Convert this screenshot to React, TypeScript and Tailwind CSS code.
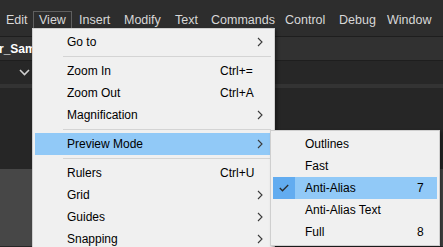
import React from "react";

const font = { fontFamily: '"Segoe UI", "Liberation Sans", Arial, sans-serif' };

const bar: [string, number, number][] = [
  ["Edit", 33, 5],
  ["View", 39, 5],
  ["Insert", 45, 6],
  ["Modify", 51, 6],
  ["Text", 36, 6],
  ["Commands", 74, 6],
  ["Control", 54, 6],
  ["Debug", 48, 6],
  ["Window", 60, 6],
];

function Chevron() {
  return (
    <svg width="6" height="10" viewBox="0 0 6 10" className="absolute right-[9px] top-[6px]">
      <polyline points="1,1 5,5 1,9" fill="none" stroke="#3a3a3a" strokeWidth="1.1" />
    </svg>
  );
}

function Row({ label, shortcut, sub, active }: { label: string; shortcut?: string; sub?: boolean; active?: boolean }) {
  return (
    <div className={`relative flex h-[22px] items-center pl-[32px] ${active ? "bg-[#91c9f7]" : ""}`}>
      <span>{label}</span>
      {shortcut && <span className="absolute left-[185px]">{shortcut}</span>}
      {sub && <Chevron />}
    </div>
  );
}

function Sep() {
  return (
    <div className="flex h-[7px] items-center pl-[28px] pr-[1px]">
      <div className="h-px w-full bg-[#d4d4d4]" />
    </div>
  );
}

export default function App() {
  return (
    <div className="relative h-[247px] w-[443px] overflow-hidden bg-[#262626] text-[12px]" style={font}>
      {/* menubar */}
      <div className="flex h-[37px] border-b border-[#1e1e1e] bg-[#2d2d2d] pt-[11px] text-[12.5px] text-[#d8d8d8]">
        {bar.map(([label, w, pl]) => (
          <div
            key={label}
            className={`h-[19px] shrink-0 leading-[16px] ${label === "View" ? "border border-[#5f5f5f]" : "border border-transparent"}`}
            style={{ width: w, paddingLeft: pl }}
          >
            {label}
          </div>
        ))}
      </div>

      {/* document tab row */}
      <div className="flex h-[24px] items-center border-b border-[#1e1e1e] bg-[#313131] text-[12px] font-bold text-white">
        <span className="-ml-[1px]">r_Sample.fla</span>
      </div>

      {/* toolbar row */}
      <div className="flex h-[23px] items-center bg-[#272727] pl-[19px]">
        <svg width="11" height="7" viewBox="0 0 11 7">
          <polyline points="1,1 5.5,5.5 10,1" fill="none" stroke="#cfcfcf" strokeWidth="1.6" />
        </svg>
      </div>
      <div className="h-[4px] bg-[#333333]" />
      <div className="h-[81px] bg-[#262626]" />
      <div className="h-[77px] bg-[#474747]" />

      {/* View menu */}
      <div className="absolute left-[32px] top-[28px] w-[243px] border border-[#cfcfcf] bg-[#f0f0f0] p-[2px] text-black shadow-[2px_2px_3px_rgba(0,0,0,0.35)]">
        <Row label="Go to" sub />
        <Sep />
        <Row label="Zoom In" shortcut="Ctrl+=" />
        <Row label="Zoom Out" shortcut="Ctrl+A" />
        <Row label="Magnification" sub />
        <Sep />
        <Row label="Preview Mode" sub active />
        <Sep />
        <Row label="Rulers" shortcut="Ctrl+U" />
        <Row label="Grid" sub />
        <Row label="Guides" sub />
        <Row label="Snapping" sub />
      </div>

      {/* Preview Mode submenu */}
      <div className="absolute left-[270px] top-[130px] w-[170px] border border-[#cfcfcf] bg-[#f0f0f0] px-[2px] py-[2px] text-black shadow-[2px_2px_3px_rgba(0,0,0,0.35)]">
        <div className="flex h-[22px] items-center pl-[32px]">Outlines</div>
        <div className="flex h-[22px] items-center pl-[32px]">Fast</div>
        <div className="relative flex h-[22px] items-center bg-[#91c9f7]">
          <div className="flex h-full w-[22px] items-center justify-center bg-[#62acf0]">
            <svg width="10" height="8" viewBox="0 0 10 8">
              <polyline points="0.8,4 3.5,6.8 9.2,1" fill="none" stroke="#2b2b2b" strokeWidth="1.3" />
            </svg>
          </div>
          <span className="ml-[10px]">Anti-Alias</span>
          <span className="absolute left-[144px]">7</span>
        </div>
        <div className="flex h-[22px] items-center pl-[32px]">Anti-Alias Text</div>
        <div className="relative flex h-[22px] items-center pl-[32px]">
          Full
          <span className="absolute left-[144px]">8</span>
        </div>
      </div>
    </div>
  );
}
